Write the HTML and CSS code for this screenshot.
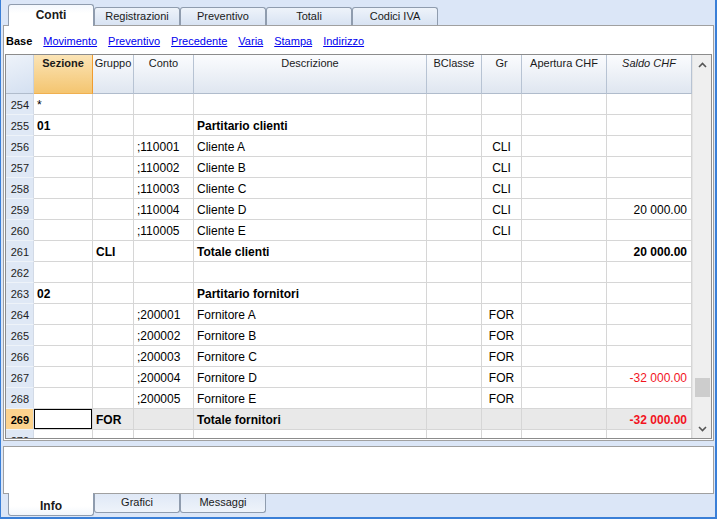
FILE: index.html
```html
<!DOCTYPE html>
<html lang="it">
<head>
<meta charset="utf-8">
<title>Conti</title>
<link rel="stylesheet" href="styles.css">
</head>
<body>
<div class="tabs top-tabs">
  <div class="tab active">Conti</div>
  <div class="tab">Registrazioni</div>
  <div class="tab">Preventivo</div>
  <div class="tab">Totali</div>
  <div class="tab">Codici IVA</div>
</div>
<div class="panel">
  <div class="viewbar">
    <span class="view-cur">Base</span>
    <a class="view-link" href="#">Movimento</a>
    <a class="view-link" href="#">Preventivo</a>
    <a class="view-link" href="#">Precedente</a>
    <a class="view-link" href="#">Varia</a>
    <a class="view-link" href="#">Stampa</a>
    <a class="view-link" href="#">Indirizzo</a>
  </div>
  <div class="grid">
    <div class="grid-main">
      <div class="row head">
        <div class="c rn corner"></div>
        <div class="c hsel">Sezione</div>
        <div class="c">Gruppo</div>
        <div class="c">Conto</div>
        <div class="c">Descrizione</div>
        <div class="c">BClasse</div>
        <div class="c">Gr</div>
        <div class="c">Apertura CHF</div>
        <div class="c it">Saldo CHF</div>
      </div>
      <div class="rows">
        <div class="row"><div class="c rn">254</div><div class="c">*</div><div class="c"></div><div class="c"></div><div class="c"></div><div class="c"></div><div class="c"></div><div class="c"></div><div class="c"></div></div>
        <div class="row b"><div class="c rn">255</div><div class="c">01</div><div class="c"></div><div class="c"></div><div class="c">Partitario clienti</div><div class="c"></div><div class="c"></div><div class="c"></div><div class="c"></div></div>
        <div class="row"><div class="c rn">256</div><div class="c"></div><div class="c"></div><div class="c">;110001</div><div class="c">Cliente A</div><div class="c"></div><div class="c ctr">CLI</div><div class="c"></div><div class="c"></div></div>
        <div class="row"><div class="c rn">257</div><div class="c"></div><div class="c"></div><div class="c">;110002</div><div class="c">Cliente B</div><div class="c"></div><div class="c ctr">CLI</div><div class="c"></div><div class="c"></div></div>
        <div class="row"><div class="c rn">258</div><div class="c"></div><div class="c"></div><div class="c">;110003</div><div class="c">Cliente C</div><div class="c"></div><div class="c ctr">CLI</div><div class="c"></div><div class="c"></div></div>
        <div class="row"><div class="c rn">259</div><div class="c"></div><div class="c"></div><div class="c">;110004</div><div class="c">Cliente D</div><div class="c"></div><div class="c ctr">CLI</div><div class="c"></div><div class="c num">20 000.00</div></div>
        <div class="row"><div class="c rn">260</div><div class="c"></div><div class="c"></div><div class="c">;110005</div><div class="c">Cliente E</div><div class="c"></div><div class="c ctr">CLI</div><div class="c"></div><div class="c"></div></div>
        <div class="row b"><div class="c rn">261</div><div class="c"></div><div class="c">CLI</div><div class="c"></div><div class="c">Totale clienti</div><div class="c"></div><div class="c"></div><div class="c"></div><div class="c num">20 000.00</div></div>
        <div class="row"><div class="c rn">262</div><div class="c"></div><div class="c"></div><div class="c"></div><div class="c"></div><div class="c"></div><div class="c"></div><div class="c"></div><div class="c"></div></div>
        <div class="row b"><div class="c rn">263</div><div class="c">02</div><div class="c"></div><div class="c"></div><div class="c">Partitario fornitori</div><div class="c"></div><div class="c"></div><div class="c"></div><div class="c"></div></div>
        <div class="row"><div class="c rn">264</div><div class="c"></div><div class="c"></div><div class="c">;200001</div><div class="c">Fornitore A</div><div class="c"></div><div class="c ctr">FOR</div><div class="c"></div><div class="c"></div></div>
        <div class="row"><div class="c rn">265</div><div class="c"></div><div class="c"></div><div class="c">;200002</div><div class="c">Fornitore B</div><div class="c"></div><div class="c ctr">FOR</div><div class="c"></div><div class="c"></div></div>
        <div class="row"><div class="c rn">266</div><div class="c"></div><div class="c"></div><div class="c">;200003</div><div class="c">Fornitore C</div><div class="c"></div><div class="c ctr">FOR</div><div class="c"></div><div class="c"></div></div>
        <div class="row"><div class="c rn">267</div><div class="c"></div><div class="c"></div><div class="c">;200004</div><div class="c">Fornitore D</div><div class="c"></div><div class="c ctr">FOR</div><div class="c"></div><div class="c num neg">-32 000.00</div></div>
        <div class="row"><div class="c rn">268</div><div class="c"></div><div class="c"></div><div class="c">;200005</div><div class="c">Fornitore E</div><div class="c"></div><div class="c ctr">FOR</div><div class="c"></div><div class="c"></div></div>
        <div class="row b sel"><div class="c rn">269</div><div class="c cur"></div><div class="c">FOR</div><div class="c"></div><div class="c">Totale fornitori</div><div class="c"></div><div class="c"></div><div class="c"></div><div class="c num neg">-32 000.00</div></div>
        <div class="row"><div class="c rn">270</div><div class="c"></div><div class="c"></div><div class="c"></div><div class="c"></div><div class="c"></div><div class="c"></div><div class="c"></div><div class="c"></div></div>
      </div>
    </div>
    <div class="vscroll">
      <svg class="arrow up" width="9" height="6" viewBox="0 0 9 6"><path d="M1 5 L4.5 1.5 L8 5" fill="none" stroke="#555" stroke-width="1.6"/></svg>
      <div class="thumb"></div>
      <svg class="arrow down" width="9" height="6" viewBox="0 0 9 6"><path d="M1 1 L4.5 4.5 L8 1" fill="none" stroke="#555" stroke-width="1.6"/></svg>
    </div>
  </div>
</div>
<div class="infobox"></div>
<div class="tabs bottom-tabs">
  <div class="tab active">Info</div>
  <div class="tab">Grafici</div>
  <div class="tab">Messaggi</div>
</div>
</body>
</html>
```

FILE: styles.css
```css
* { box-sizing: border-box; }
html, body { margin: 0; padding: 0; }
body {
  width: 717px;
  height: 519px;
  background: #dbe6f7;
  border-left: 1px solid #3a7fd7;
  border-right: 2px solid #3a7fd7;
  border-bottom: 2px solid #3a7fd7;
  font-family: "Liberation Sans", Arial, sans-serif;
  font-size: 11px;
  color: #1a1a1a;
  overflow: hidden;
  display: flex;
  flex-direction: column;
}

/* ---------- tabs ---------- */
.tabs { display: flex; padding-left: 7px; position: relative; z-index: 2; }
.top-tabs { height: 25px; align-items: flex-end; }
.tab {
  width: 86px;
  text-align: center;
  border: 1px solid #8f9cae;
  color: #1a1a1a;
}
.top-tabs .tab {
  height: 18px;
  line-height: 15px;
  padding-top: 1px;
  border-bottom: none;
  border-radius: 3px 3px 0 0;
  background: linear-gradient(#eef3fa, #d8e3f3);
}
.top-tabs .tab.active {
  height: 22px;
  margin-bottom: -1px;
  padding-top: 3px;
  font-weight: bold;
  font-size: 12px;
  background: linear-gradient(#f4f8fd, #ffffff 40%);
}
.bottom-tabs { align-items: flex-start; margin-top: -1px; }
.bottom-tabs .tab {
  height: 19px;
  margin-top: 1px;
  line-height: 16px;
  border-top: none;
  border-radius: 0 0 3px 3px;
  background: linear-gradient(#dfe8f6, #eef3fa);
}
.bottom-tabs .tab.active {
  height: 23px;
  margin-top: 0;
  padding-top: 5px;
  font-weight: bold;
  font-size: 12px;
  background: linear-gradient(#ffffff 60%, #f2f6fb);
}

/* ---------- main panel ---------- */
.panel {
  height: 416px;
  margin: 0 1px 0 2px;
  border: 1px solid #a0a0a0;
  background: #fff;
  padding: 0 1px 1px 1px;
  display: flex;
  flex-direction: column;
}
.viewbar {
  height: 28px;
  padding: 9px 0 0 1px;
  display: flex;
  gap: 11px;
  line-height: 13px;
  white-space: nowrap;
}
.view-cur { font-weight: bold; color: #000; }
.view-link { color: #0000ee; text-decoration: underline; }

/* ---------- grid ---------- */
.grid {
  height: 385px;
  border: 1px solid #8c8c8c;
  display: flex;
}
.grid-main { width: 686px; }
.row {
  display: grid;
  grid-template-columns: 28px 59px 41px 60px 233px 55px 40px 85px 85px;
  height: 21px;
}
.c {
  border-right: 1px solid #d6d6d6;
  border-bottom: 1px solid #d6d6d6;
  padding: 3px 3px 0 3px;
  line-height: 17px;
  font-size: 12px;
  color: #000;
  white-space: nowrap;
  overflow: hidden;
}
.c.rn {
  background: #dfe8f5;
  border-bottom-color: #eef3f9;
  border-right-color: #d2dae6;
  text-align: right;
  padding-right: 4px;
  font-size: 11px;
  color: #222;
}
.c.ctr { text-align: center; padding-left: 0; padding-right: 0; }
.c.num { text-align: right; padding-right: 4px; }
.c.neg { color: #f2141e; }
.row.b .c { font-weight: bold; }
.row.b .c.rn { font-weight: normal; }
.row.sel .c { background: #e9e9e9; }
.row.sel .c.rn { background: #fcd38e; font-weight: bold; color: #000; }
.row.sel .c.cur { background: #fff; box-shadow: inset 0 0 0 1px #000; }

.row.head { height: 39px; }
.head .c {
  background: linear-gradient(#fbfcfe, #dfe6f0);
  border-right-color: #b7c3d3;
  border-bottom-color: #b0bccc;
  text-align: center;
  font-size: 11px;
  line-height: 14px;
  padding: 1px 0 0 0;
  color: #1a1a1a;
}
.head .c.corner {
  background: linear-gradient(160deg, #eef3fa, #d4e0f1);
  border-right-color: #c6d1e0;
}
.head .c.hsel {
  background: linear-gradient(#fbe4b6, #f4c570);
  border-right-color: #f09c30;
  border-bottom-color: #f0b050;
  font-weight: bold;
}
.head .c.it { font-style: italic; }
.rows { height: 344px; overflow: hidden; }

/* ---------- scrollbar ---------- */
.vscroll {
  width: 19px;
  background: #efefef;
  border-left: 1px solid #e4e4e4;
  position: relative;
}
.arrow { position: absolute; left: 5px; }
.arrow.up { top: 7px; }
.arrow.down { top: 371px; }
.thumb {
  position: absolute;
  left: 2px;
  width: 15px;
  top: 323px;
  height: 19px;
  background: #cdcdcd;
}

/* ---------- info box ---------- */
.infobox {
  height: 48px;
  margin: 5px 1px 0 2px;
  border: 1px solid #a0a0a0;
  background: #fff;
}
```
